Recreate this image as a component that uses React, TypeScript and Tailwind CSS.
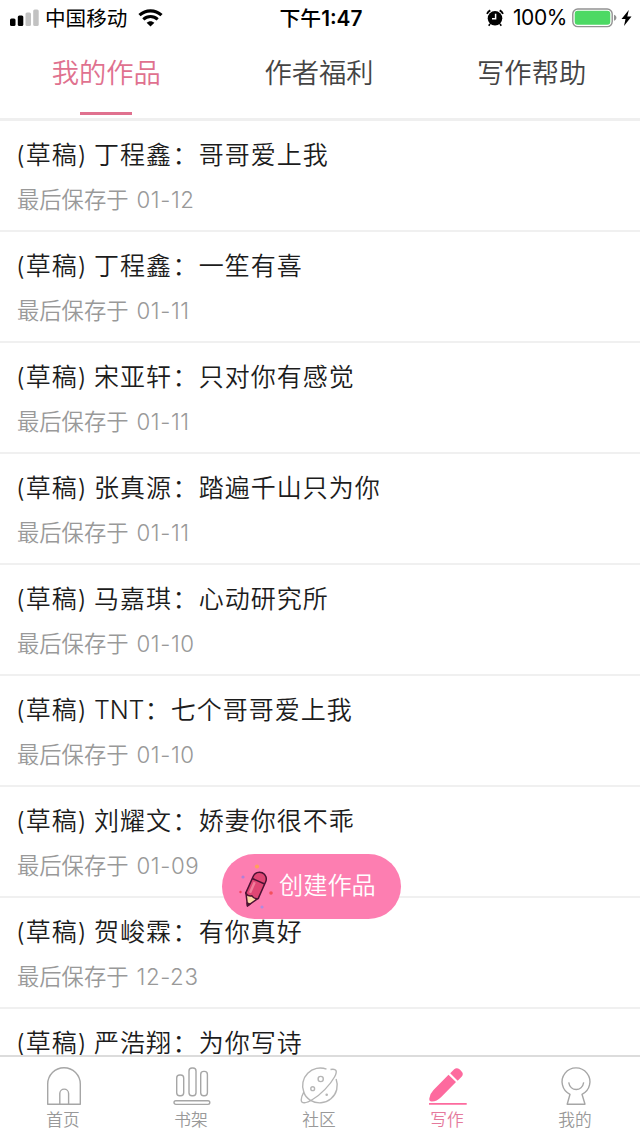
import { FC, ReactNode } from 'react';

type Draft = { id: number; author: string; title: string; savedAt: string };

const drafts: Draft[] = [
  { id: 1, author: '丁程鑫', title: '哥哥爱上我', savedAt: '01-12' },
  { id: 2, author: '丁程鑫', title: '一笙有喜', savedAt: '01-11' },
  { id: 3, author: '宋亚轩', title: '只对你有感觉', savedAt: '01-11' },
  { id: 4, author: '张真源', title: '踏遍千山只为你', savedAt: '01-11' },
  { id: 5, author: '马嘉琪', title: '心动研究所', savedAt: '01-10' },
  { id: 6, author: 'TNT', title: '七个哥哥爱上我', savedAt: '01-10' },
  { id: 7, author: '刘耀文', title: '娇妻你很不乖', savedAt: '01-09' },
  { id: 8, author: '贺峻霖', title: '有你真好', savedAt: '12-23' },
  { id: 9, author: '严浩翔', title: '为你写诗', savedAt: '12-20' },
];

const tabs = ['我的作品', '作者福利', '写作帮助'];

const StatusBar: FC = () => (
  <div className="flex h-9 shrink-0 items-center justify-between pl-[10px] pr-[8px] font-[Inter,'Noto_Sans_CJK_SC',sans-serif] font-normal text-black">
    <div className="flex w-[220px] items-center">
      <svg width="29" height="18" viewBox="0 0 29 18">
        <rect x="0" y="9.5" width="5.5" height="7.5" rx="1.5" fill="#000" />
        <rect x="7.8" y="6.5" width="5.5" height="10.5" rx="1.5" fill="#000" />
        <rect x="15.5" y="3.5" width="5.5" height="13.5" rx="1.5" fill="#c2c2c2" />
        <rect x="23.2" y="0.5" width="5.5" height="16.5" rx="1.5" fill="#c2c2c2" />
      </svg>
      <span className="ml-[6px] mt-px text-[20.6px] leading-9">中国移动</span>
      <svg className="ml-[11px]" width="25" height="18" viewBox="0 0 25 18">
        <path d="M1.5 6.2C7.8.3 17.2.3 23.5 6.2" fill="none" stroke="#000" strokeWidth="3.2" />
        <path d="M5.3 10.3c4.2-3.9 10.2-3.9 14.4 0" fill="none" stroke="#000" strokeWidth="3" />
        <path d="M8.6 13.7c2.3-2.1 5.5-2.1 7.8 0L12.5 17.5z" fill="#000" />
      </svg>
    </div>
    <div className="mt-px text-[20.8px] font-medium leading-9">
      下午<span className="font-semibold">1:47</span>
    </div>
    <div className="flex w-[220px] items-center justify-end">
      <svg width="18" height="18" viewBox="0 0 18 18">
        <circle cx="9" cy="9.3" r="7.3" fill="#000" />
        <path d="M1 4.8A8 8 0 0 1 4.3 1.4M17 4.8a8 8 0 0 0-3.3-3.4" fill="none" stroke="#000" strokeWidth="1.8" />
        <path d="M4 15l-1.3 1.7M14 15l1.3 1.7" stroke="#000" strokeWidth="1.6" />
        <path d="M9.6 4.8v5H6" fill="none" stroke="#fff" strokeWidth="1.5" />
      </svg>
      <span className="ml-[9px] text-[21px] leading-9 tracking-[-0.4px]">100%</span>
      <svg className="ml-[5px]" width="45" height="20" viewBox="0 0 45 20">
        <rect x="0.8" y="1" width="39.4" height="17.6" rx="5" fill="none" stroke="#929292" strokeWidth="1.4" />
        <rect x="2.7" y="2.8" width="35.6" height="14" rx="3" fill="#4cd964" />
        <path d="M42 6.8c3.2 1 3.2 5 0 6z" fill="#929292" />
      </svg>
      <svg className="ml-[4px]" width="11" height="16" viewBox="0 0 11 16">
        <path d="M7.8 0L.5 9h4L3 16l7.5-9.4H6.3z" fill="#000" />
      </svg>
    </div>
  </div>
);

const DraftRow: FC<{ draft: Draft }> = ({ draft }) => (
  <li className="h-[111px] border-b-2 border-[#f0f0f0] pl-4 pt-[15px]">
    <div className="flex text-[25px] leading-[38px] tracking-[1px] text-[#1c1c1c]">
      <span className="w-[78px]">(草稿)</span>
      <span className={draft.author === 'TNT' ? 'tracking-[-0.2px]' : ''}>{draft.author}</span>
      <span className="ml-[0.6px]">：{draft.title}</span>
    </div>
    <div className="mt-[9px] pl-px text-[22.3px] leading-[34px] text-[#999]">
      最后保存于<span className="ml-2 tracking-[0.6px]">{draft.savedAt}</span>
    </div>
  </li>
);

const PencilIcon: FC = () => (
  <svg width="38" height="48" viewBox="0 0 38 48">
    <g transform="translate(16 26) rotate(24)" stroke="#4a1233" strokeWidth="1.5" strokeLinejoin="round">
      <path d="M-6.8 7L0 18.5l6.8-11.5z" fill="#fbd9a6" />
      <path d="M-6.8-11a6.8 6.8 0 0 1 13.6 0v18.5q-3.4 2.2-6.8 0-3.4 2.2-6.8 0z" fill="#df4674" />
      <path d="M-6.8-8.5h13.6" />
      <path d="M-1.5 16L0 18.5l1.5-2.5z" fill="#4a1233" />
      <path d="M-3-6v11.500" stroke="#f27e9c" strokeWidth="2.4" />
    </g>
    <circle cx="18" cy="3.5" r="2.1" fill="#ffa05c" />
    <circle cx="4" cy="14" r="1.6" fill="#b07fd8" />
    <circle cx="1.5" cy="29" r="1.2" fill="#f0405f" />
    <circle cx="32" cy="30" r="1.8" fill="#f4505c" />
    <circle cx="23" cy="44" r="1.6" fill="#b08ae0" />
  </svg>
);

const NavIcon: FC<{ children: ReactNode }> = ({ children }) => (
  <svg
    className="mr-[2px]"
    width="40"
    height="40"
    viewBox="0 0 40 40"
    fill="none"
    stroke="#a6a6a6"
    strokeWidth="1.4"
    strokeLinejoin="round"
  >
    {children}
  </svg>
);

const navItems = [
  {
    label: '首页',
    icon: (
      <NavIcon>
        <path d="M4.7 38.2V18a16.3 16.3 0 0 1 32.6 0v20.2z" />
        <path d="M16.8 38V27.5a4.4 4.4 0 0 1 8.8 0V38" />
      </NavIcon>
    ),
  },
  {
    label: '书架',
    icon: (
      <NavIcon>
        <rect x="5.7" y="9" width="7" height="20.8" rx="3" />
        <rect x="18" y="2" width="7" height="27.8" rx="3" />
        <rect x="29.7" y="5.4" width="6.7" height="24.4" rx="3" />
        <rect x="3" y="34.8" width="35.8" height="3.6" rx="1.8" />
      </NavIcon>
    ),
  },
  {
    label: '社区',
    icon: (
      <NavIcon>
        <g stroke="#b5b5b5">
          <path d="M27.5 3.2A17.6 17.6 0 0 0 4.8 26M37.1 13A17.6 17.6 0 0 1 11.5 34.3" />
          <path d="M31.5 3.5c5.500-1.200 7.500 1.300 4 7.500C31 19 22 28.500 13.500 33.500 7 37.500 2.300 38 2.200 34c0-2.500 1-5 2.600-8 1 3.500 3.500 6.500 6.700 8.300" />
          <circle cx="21.7" cy="13" r="2.6" />
          <circle cx="13.7" cy="22.7" r="1.9" />
          <circle cx="27.7" cy="28.7" r="0.6" />
        </g>
      </NavIcon>
    ),
  },
  {
    label: '写作',
    active: true,
    icon: (
      <NavIcon>
        <g stroke="none" fill="#fd6a9e">
          <path d="M21.5 8.8l7.5 7.2L14 31.300q-4.500 4.500-9.500 4.200-2.500 0-2.200-3Q3 27.500 6.500 24z" />
          <path d="M23.2 7.2l4-4q2.600-2.300 5.600.4l1.600 1.600q2.600 2.600.4 5.200l-4.100 4.300z" />
          <path d="M2 36.900h37.700v1.900H2z" />
        </g>
      </NavIcon>
    ),
  },
  {
    label: '我的',
    icon: (
      <NavIcon>
        <path d="M15 28.3a13.9 13.9 0 1 1 12 0l3 9.900H12.200z" />
        <path d="M13.7 16.3c1.500 9.500 13.500 9.500 15 0" />
      </NavIcon>
    ),
  },
];

const App: FC = () => {
  return (
    <div className="relative flex h-[1139px] w-[640px] flex-col overflow-hidden bg-white font-[Inter,'Noto_Sans_CJK_SC_DemiLight','Noto_Sans_CJK_SC',sans-serif] font-light">
      <StatusBar />
      <div className="grid h-[85px] shrink-0 grid-cols-3 border-b-[3px] border-[#efefef] pr-[2px]">
        {tabs.map((tab, index) => (
          <div
            key={tab}
            className={`flex flex-col items-center text-[27.3px] ${index === 0 ? 'text-[#e0718f]' : 'text-[#444]'}`}
          >
            <span className="mt-[18px] leading-[40px]">{tab}</span>
            {index === 0 && <span className="mt-[18px] h-[3px] w-[52px] bg-[#e0718f]" />}
          </div>
        ))}
      </div>

      <ul className="min-h-0 flex-1 overflow-hidden">
        {drafts.map((draft) => (
          <DraftRow key={draft.id} draft={draft} />
        ))}
      </ul>

      <nav className="grid h-[84px] shrink-0 grid-cols-5 border-t-2 border-[#dcdcdc] bg-white">
        {navItems.map(({ label, icon, active }) => (
          <button key={label} className="flex flex-col items-center pt-[9px]">
            {icon}
            <span
              className={`mr-[2px] mt-[2px] text-[16.7px] leading-6 ${active ? 'text-[#e5799c]' : 'text-[#999]'}`}
            >
              {label}
            </span>
          </button>
        ))}
      </nav>

      <button className="absolute left-[222px] top-[854px] flex h-[65px] w-[179px] items-center rounded-full bg-[#fd7eb1] pl-[17px] text-white">
        <PencilIcon />
        <span className="ml-[2px] text-[24.2px]">创建作品</span>
      </button>
    </div>
  );
};

export default App;
